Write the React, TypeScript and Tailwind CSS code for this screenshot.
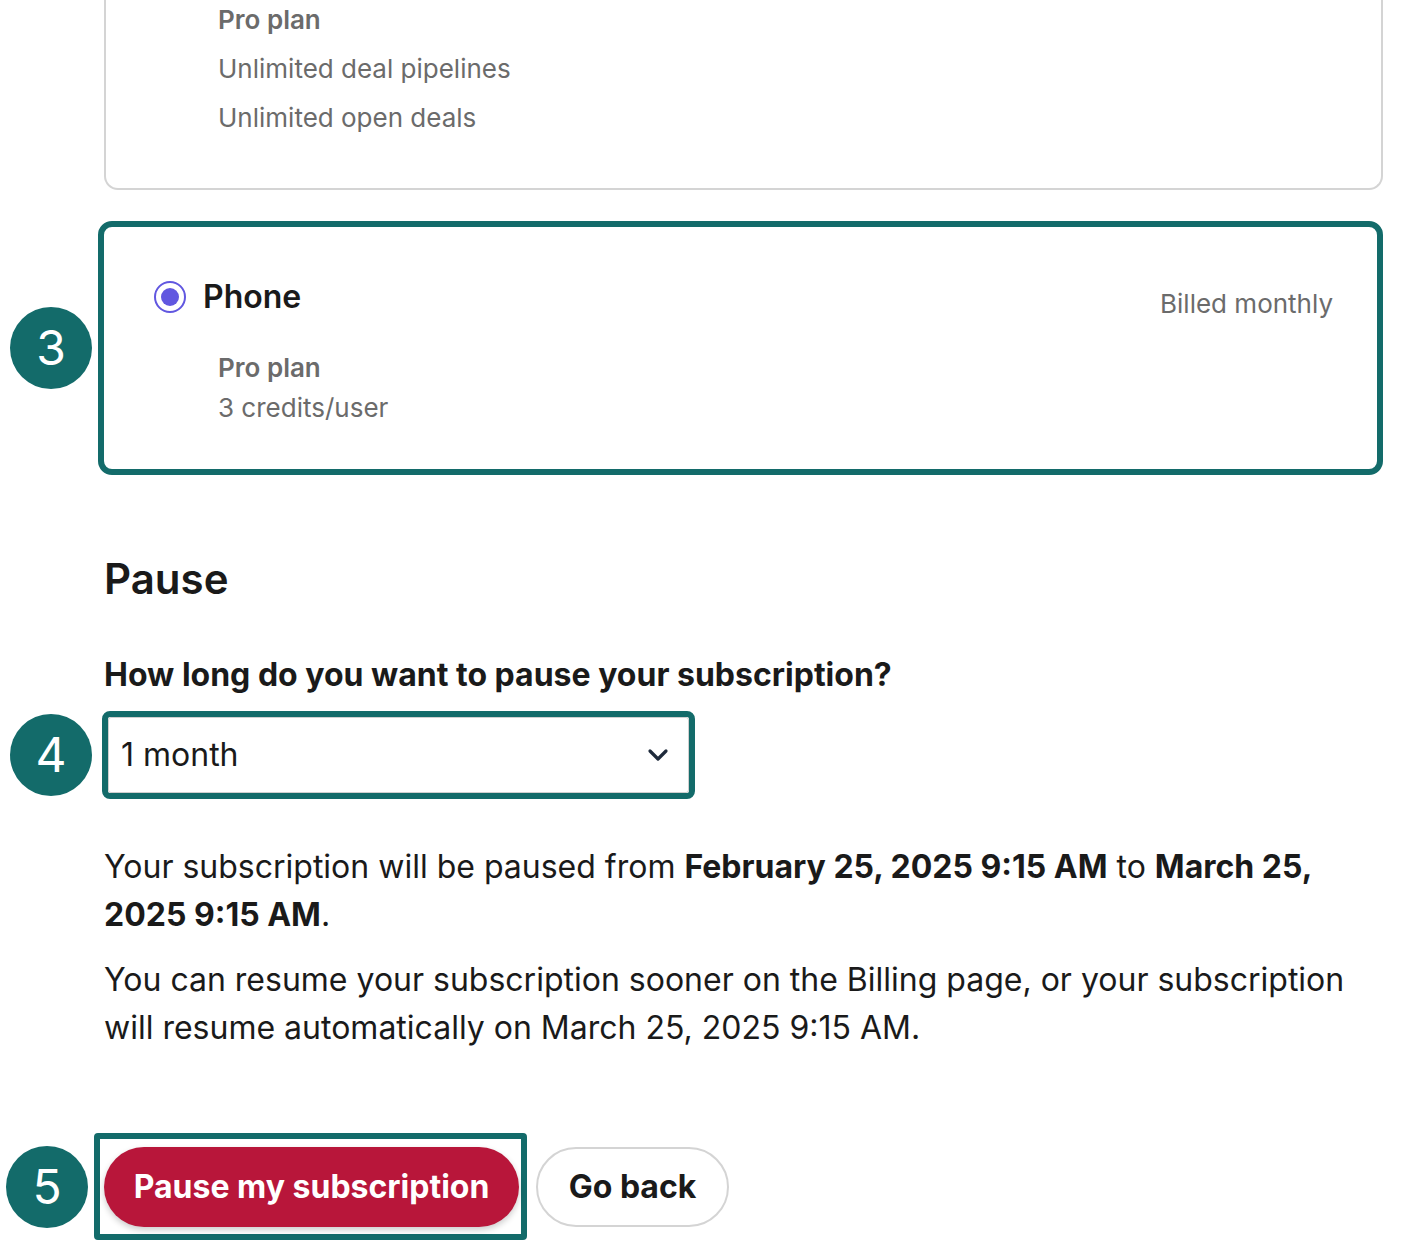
import React, { useState } from 'react';

const Badge = ({ n, className }: { n: string; className: string }) => (
  <div
    className={`absolute top-1/2 -translate-y-1/2 w-[82px] h-[82px] rounded-full bg-[#136b6a] text-white flex items-center justify-center text-[48px] leading-none ${className}`}
  >
    {n}
  </div>
);

const App = () => {
  const [months] = useState('1 month');

  return (
    <div className="min-h-[1260px] bg-white text-[#1a1a1a] font-['Inter','Liberation_Sans',sans-serif] pl-[104px] pr-[39px]">
      {/* previous card, cut off at the top */}
      <div className="border-2 border-t-0 border-[#d4d4d4] rounded-b-[14px] pl-[112px] pb-[46px]">
        <div className="-mt-[5px] text-[26px] leading-[49px] text-[#6b6b6b]">
          <div className="font-semibold">Pro plan</div>
          <div>Unlimited deal pipelines</div>
          <div>Unlimited open deals</div>
        </div>
      </div>

      {/* phone card */}
      <div className="relative mt-[31px] -ml-[6px]">
        <Badge n="3" className="right-full mr-[6px]" />
        <div className="border-[6px] border-[#136b6a] rounded-[14px] pl-[50px] pr-[44px] pt-[50px] pb-[41px]">
          <div className="h-[40px] flex items-start justify-between">
            <div className="flex items-center gap-[17px]">
              <span className="w-[32px] h-[32px] rounded-full border-2 border-[#6157e0] flex items-center justify-center">
                <span className="w-[18px] h-[18px] rounded-full bg-[#6157e0]" />
              </span>
              <span className="text-[32px] leading-[40px] font-semibold">Phone</span>
            </div>
            <span className="mt-[7px] text-[26px] leading-[40px] text-[#6b6b6b]">Billed monthly</span>
          </div>
          <div className="pl-[64px] mt-[31px] text-[26px] leading-[40px] text-[#6b6b6b]">
            <div className="font-semibold">Pro plan</div>
            <div>3 credits/user</div>
          </div>
        </div>
      </div>

      <h2 className="mt-[80px] text-[42px] leading-[48px] font-semibold">Pause</h2>

      <div className="mt-[52px] text-[32px] leading-[40px] font-bold">
        How long do you want to pause your subscription?
      </div>

      <div className="relative mt-[16px] -ml-[2px] w-[593px]">
        <Badge n="4" className="right-full mr-[10px]" />
        <div className="border-[6px] border-[#136b6a] rounded-[8px]">
          <div className="h-[76px] border border-[#cfcfcf] rounded-[3px] flex items-center justify-between pl-[12px] pr-[19px]">
            <span className="text-[32px]">{months}</span>
            <svg width="22" height="14" viewBox="0 0 22 14" fill="none">
              <path d="M3 3l8 8 8-8" stroke="#1e2a3b" strokeWidth="3.2" strokeLinecap="round" strokeLinejoin="round" />
            </svg>
          </div>
        </div>
      </div>

      <div className="mt-[44px] text-[32px] leading-[48px]">
        <p>
          Your subscription will be paused from <b className="font-bold">February 25, 2025 9:15 AM</b> to{' '}
          <b className="font-bold">March 25, 2025 9:15 AM</b>.
        </p>
        <p className="mt-[17px]">
          You can resume your subscription sooner on the Billing page, or your subscription will resume automatically on
          March 25, 2025 9:15 AM.
        </p>
      </div>

      <div className="mt-[81px] flex items-center gap-[9px] -ml-[10px]">
        <div className="relative">
          <Badge n="5" className="right-full mr-[6px]" />
          <div className="border-[6px] border-[#136b6a] rounded-[4px] pl-[4px] pr-[2px] pt-[8px] pb-[7px]">
            <button className="h-[80px] w-[415px] rounded-full bg-[#b8163a] text-white text-[32px] font-bold shadow-[0_3px_6px_rgba(0,0,0,0.2)]">
              Pause my subscription
            </button>
          </div>
        </div>
        <button className="h-[80px] w-[193px] rounded-full bg-white border-2 border-[#d4d4d4] text-[32px] font-bold text-[#1a1a1a]">
          Go back
        </button>
      </div>
    </div>
  );
};

export default App;
